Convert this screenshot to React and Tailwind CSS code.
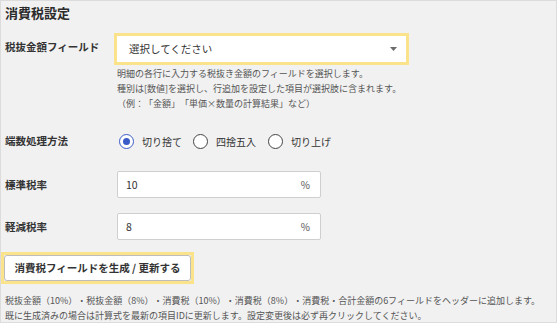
const FONT = { fontFamily: '"Noto Sans CJK JP", "Noto Sans", sans-serif' }

function Radio({ checked, label, gap }) {
  return (
    <label className={`flex items-center gap-[8px] ${gap}`}>
      <span
        className={`flex h-[15px] w-[15px] items-center justify-center rounded-full border-[1.5px] bg-white ${
          checked ? 'border-[#3a5bc7]' : 'border-[#444]'
        }`}
      >
        {checked && <span className="h-[7px] w-[7px] rounded-full bg-[#3a5bc7]" />}
      </span>
      <span className="text-[10px] text-[#333]">{label}</span>
    </label>
  )
}

function RateInput({ value }) {
  return (
    <div className="flex h-[27px] w-[204px] items-center justify-between rounded-[2px] border border-[#cfcfcf] bg-white pl-[8px] pr-[10px] text-[10.5px] text-[#333]">
      <span>{value}</span>
      <span className="text-[10px] text-[#555]">%</span>
    </div>
  )
}

export default function App() {
  return (
    <div style={FONT} className="h-[324px] w-[559px] bg-white [text-spacing-trim:space-all]">
      <div className="h-[323px] w-[557px] border border-[#dcdcdc] bg-[#f1f1f1]">
        <div className="pl-[4px] pt-[2px] text-[13px] font-bold leading-[20px] text-[#2b2b2b]">消費税設定</div>

        <div className="mt-[10px] flex items-center">
          <div className="w-[113px] pl-[4px] pb-[4px] text-[10.5px] font-bold text-[#333]">税抜金額フィールド</div>
          <div className="w-[295px] border-[3px] border-[#fbe38c]">
            <div className="flex h-[26px] items-center justify-between bg-white pl-[12px] pr-[9px] text-[10.5px] text-[#333]">
              <span>選択してください</span>
              <svg width="7" height="4" viewBox="0 0 7 4">
                <path d="M0 0h7L3.5 4z" fill="#6b6b6b" />
              </svg>
            </div>
          </div>
        </div>

        <div className="ml-[116px] mt-[1px] text-[9px] leading-[15px] text-[#555]">
          <div>明細の各行に入力する税抜き金額のフィールドを選択します。</div>
          <div>種別は[数値]を選択し、行追加を設定した項目が選択肢に含まれます。</div>
          <div>（例：「金額」「単価×数量の計算結果」など）</div>
        </div>

        <div className="mt-[20px] flex h-[20px] items-center">
          <div className="w-[118px] pl-[4px] text-[10.5px] font-bold text-[#333]">端数処理方法</div>
          <Radio checked label="切り捨て" gap="mr-[11px]" />
          <Radio label="四捨五入" gap="mr-[12px]" />
          <Radio label="切り上げ" gap="" />
        </div>

        <div className="mt-[20px] flex items-center">
          <div className="w-[116px] pl-[4px] text-[10.5px] font-bold text-[#333]">標準税率</div>
          <RateInput value="10" />
        </div>

        <div className="mt-[15px] flex items-center">
          <div className="w-[116px] pl-[4px] text-[10.5px] font-bold text-[#333]">軽減税率</div>
          <RateInput value="8" />
        </div>

        <div className="mt-[12px] w-[193px] border-[3px] border-[#fbe38c]">
          <button className="flex h-[26px] w-[187px] items-center justify-center rounded-[3px] border border-[#bdbdbd] bg-white text-[10.5px] font-bold text-[#333]">
            消費税フィールドを生成 / 更新する
          </button>
        </div>

        <div className="mt-[9px] pl-[4px] text-[9px] leading-[15px] text-[#555]">
          <div>税抜金額（10%）・税抜金額（8%）・消費税（10%）・消費税（8%）・消費税・合計金額の6フィールドをヘッダーに追加します。</div>
          <div>既に生成済みの場合は計算式を最新の項目IDに更新します。設定変更後は必ず再クリックしてください。</div>
        </div>
      </div>
    </div>
  )
}
